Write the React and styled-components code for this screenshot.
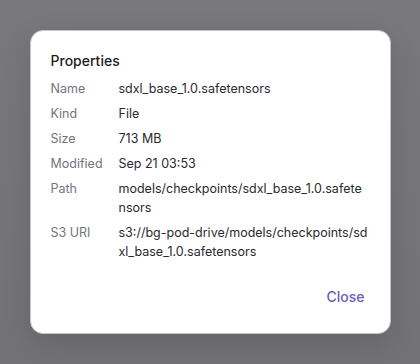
import React from 'react';
import styled, { createGlobalStyle } from 'styled-components';

const GlobalStyle = createGlobalStyle`
  html, body {
    margin: 0;
    padding: 0;
  }
  body {
    font-family: Inter, "Noto Sans", sans-serif;
    -webkit-font-smoothing: antialiased;
  }
`;

const rows = [
    { label: 'Name', value: 'sdxl_base_1.0.safetensors' },
    { label: 'Kind', value: 'File' },
    { label: 'Size', value: '713 MB' },
    { label: 'Modified', value: 'Sep 21 03:53' },
    { label: 'Path', value: 'models/checkpoints/sdxl_base_1.0.safetensors' },
    { label: 'S3 URI', value: 's3://bg-pod-drive/models/checkpoints/sdxl_base_1.0.safetensors' },
];

const App = () => {
    return (
        <>
            <GlobalStyle />
            <Overlay>
                <Dialog role="dialog" aria-labelledby="props-title">
                    <Title id="props-title">Properties</Title>
                    <List>
                        {rows.map((r) => (
                            <React.Fragment key={r.label}>
                                <Label>{r.label}</Label>
                                <Value>{r.value}</Value>
                            </React.Fragment>
                        ))}
                    </List>
                    <Footer>
                        <TextButton>Close</TextButton>
                    </Footer>
                </Dialog>
            </Overlay>
        </>
    );
};

const Overlay = styled.div`
  width: 420px;
  height: 364px;
  display: flex;
  align-items: center;
  justify-content: center;
  background: linear-gradient(180deg, #79797c 0%, #747479 60%, #717176 100%);
`;

const Dialog = styled.div`
  box-sizing: border-box;
  width: 361px;
  padding: 20px;
  background: #fff;
  border: 1px solid #c4c4cc;
  border-radius: 13px;
  box-shadow: 0 8px 28px rgba(0, 0, 0, 0.12);
`;

const Title = styled.h2`
  margin: 0 0 8px;
  font-size: 14px;
  line-height: 20px;
  font-weight: 500;
  color: #1d1d22;
`;

const List = styled.div`
  display: grid;
  grid-template-columns: 68px 1fr;
  row-gap: 6px;
  font-size: 12.5px;
  line-height: 19px;
`;

const Label = styled.div`
  color: #74747e;
`;

const Value = styled.div`
  padding-right: 2px;
  color: #2a2a30;
  word-break: break-all;
`;

const Footer = styled.div`
  display: flex;
  justify-content: flex-end;
  margin-top: 20px;
  margin-right: -1px;
`;

const TextButton = styled.button`
  border: none;
  background: none;
  padding: 6px 6px;
  font-family: inherit;
  font-size: 14px;
  line-height: 20px;
  font-weight: 500;
  color: #6a5fb6;
  cursor: pointer;
  border-radius: 6px;
`;

export default App;
